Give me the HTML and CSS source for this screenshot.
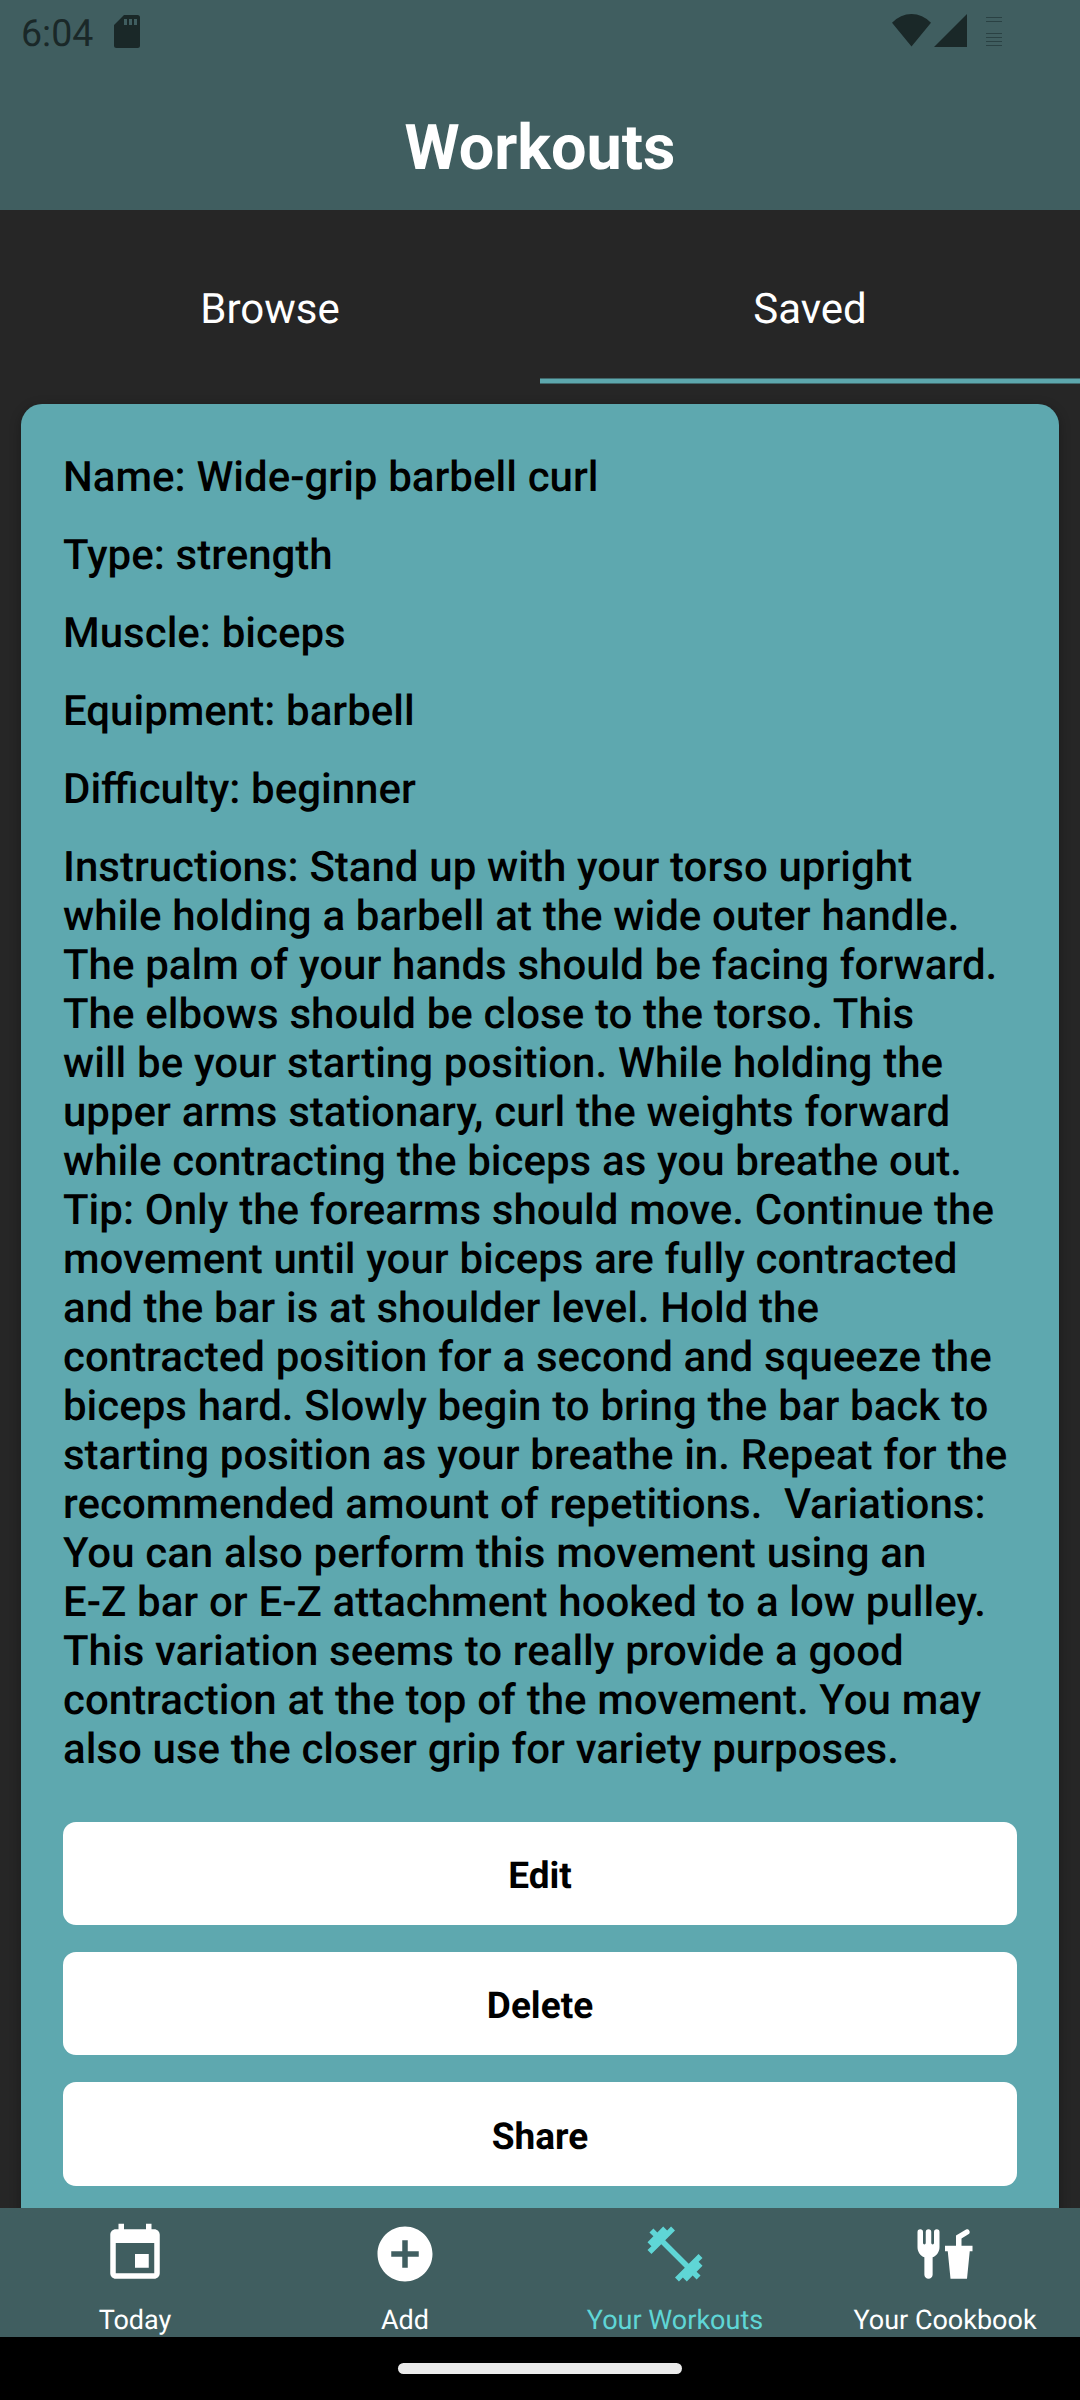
FILE: index.html
```html
<!DOCTYPE html>
<html lang="en">
<head>
<meta charset="utf-8">
<title>Workouts</title>
<link rel="stylesheet" href="styles.css">
</head>
<body>
<div class="screen">
  <div class="statusbar">
    <span class="clock">6:04</span>
    <svg class="sd" viewBox="0 0 26 33"><path fill-rule="evenodd" d="M10 0H23.5Q26 0 26 2.5V30.5Q26 33 23.5 33H2.500Q0 33 0 30.500V10ZM10 4V10H13V4ZM15 4V10H18V4ZM20 4V10H23V4Z"/></svg>
    <svg class="signals" viewBox="0 0 110 33"><path d="M0 8.800Q8.500 0 19.500 0T39 8.800L19.500 32.500ZM42 33L75 0V33Z"/><path class="battery" d="M94 3h16v1H94zM94 7h16v1H94zM94 19h16v1H94zM94 23h16v1H94zM94 27h16v1H94zM94 31h16v1H94z"/></svg>
  </div>
  <header class="header"><h1 class="title">Workouts</h1></header>
  <div class="tabs">
    <div class="tab">Browse</div>
    <div class="tab tab-active">Saved</div>
  </div>
  <main class="content">
    <article class="card">
      <p class="field">Name: Wide-grip barbell curl</p>
      <p class="field">Type: strength</p>
      <p class="field">Muscle: biceps</p>
      <p class="field">Equipment: barbell</p>
      <p class="field">Difficulty: beginner</p>
      <p class="field">Instructions: Stand up with your torso upright
while holding a barbell at the wide outer handle.
The palm of your hands should be facing forward.
The elbows should be close to the torso. This
will be your starting position. While holding the
upper arms stationary, curl the weights forward
while contracting the biceps as you breathe out.
Tip: Only the forearms should move. Continue the
movement until your biceps are fully contracted
and the bar is at shoulder level. Hold the
contracted position for a second and squeeze the
biceps hard. Slowly begin to bring the bar back to
starting position as your breathe in. Repeat for the
recommended amount of repetitions.  Variations:
You can also perform this movement using an
E-Z bar or E-Z attachment hooked to a low pulley.
This variation seems to really provide a good
contraction at the top of the movement. You may
also use the closer grip for variety purposes.</p>
      <div class="actions">
        <button class="button">Edit</button>
        <button class="button">Delete</button>
        <button class="button button-last">Share</button>
      </div>
    </article>
  </main>
  <nav class="nav">
    <div class="item">
      <svg class="icon" viewBox="0 0 24 24"><path d="M17 12h-5v5h5v-5zM16 1v2H8V1H6v2H5c-1.110 0-1.990.9-1.990 2L3 19c0 1.100.89 2 2 2h14c1.100 0 2-.9 2-2V5c0-1.100-.9-2-2-2h-1V1h-2zm3 18H5V8h14v11z"/></svg>
      <span class="label">Today</span>
    </div>
    <div class="item">
      <svg class="icon" viewBox="0 0 24 24"><path d="M12 2C6.480 2 2 6.480 2 12s4.480 10 10 10 10-4.480 10-10S17.520 2 12 2zm5 11h-4v4h-2v-4H7v-2h4V7h2v4h4v2z"/></svg>
      <span class="label">Add</span>
    </div>
    <div class="item item-active">
      <svg class="icon" viewBox="0 0 24 24"><path d="M20.570 14.860L22 13.430L20.570 12L17 15.570L8.430 7L12 3.430L10.570 2L9.140 3.430L7.710 2L5.570 4.140L4.140 2.710L2.710 4.140L4.140 5.570L2 7.710L3.430 9.140L2 10.570L3.430 12L7 8.430L15.570 17L12 20.570L13.430 22L14.860 20.570L16.290 22L18.430 19.860L19.860 21.290L21.290 19.860L19.860 18.430L22 16.290Z"/></svg>
      <span class="label">Your Workouts</span>
    </div>
    <div class="item">
      <svg class="icon" viewBox="0 0 24 24"><path d="M3 3A1 1 0 0 0 2 4V9.500C2 11.190 3.030 12.630 4.500 13.220V19.500A1.500 1.500 0 0 0 7.500 19.500V13.220C8.970 12.630 10 11.190 10 9.500V4A1 1 0 0 0 8 4V8A.5.5 0 0 1 7 8V4A1 1 0 0 0 5 4V8A.5.5 0 0 1 4 8V4A1 1 0 0 0 3 3M19.880 3C19.750 3 19.620 3.090 19.500 3.160L16 5.250V9H12V11H13L14 21H20L21 11H22V9H18V6.340L20.500 4.840C21 4.560 21.130 4 20.840 3.500C20.630 3.140 20.260 2.950 19.880 3Z"/></svg>
      <span class="label">Your Cookbook</span>
    </div>
  </nav>
  <div class="gesture"><div class="pill"></div></div>
</div>
</body>
</html>
```
FILE: styles.css
```css
* { box-sizing: border-box; }
body { margin: 0; font-family: Roboto, sans-serif; background: #000; text-rendering: geometricPrecision; }
.screen { width: 1080px; height: 2400px; display: flex; flex-direction: column; overflow: hidden; background: #262626; }
.statusbar { height: 66px; flex: none; background: #405e60; color: #1a2828; display: flex; align-items: flex-start; padding: 0 78px 0 21px; }
.clock { font-size: 37.500px; line-height: 44px; margin-top: 12px; width: 93px; }
.sd { width: 26px; height: 33px; margin-top: 15px; fill: #1a2828; }
.signals { width: 110px; height: 33px; margin: 14px 0 0 auto; fill: #1a2828; }
.battery { fill: #2a4143; }
.header { height: 144px; flex: none; background: #405e60; display: flex; justify-content: center; }
.title { margin: 46px 0 0; font-size: 63px; line-height: 74px; font-weight: 700; color: #fff; }
.tabs { height: 174px; flex: none; display: flex; color: #fff; }
.tab { flex: 1; display: flex; align-items: center; justify-content: center; font-size: 42px; padding-top: 24px; }
.tab-active { background: linear-gradient(#41696c 1px, #5da7ad 1px, #5da7ad 5px, #41696c 5px) 0 100% / 100% 6px no-repeat; }
.content { flex: 1; min-height: 0; overflow: hidden; padding: 20px 21px 0; }
.card { height: 1900px; background: #5ea8af; border-radius: 21px; padding: 49px 42px 0; color: #000; box-shadow: 0 3px 12px rgba(0, 0, 0, .3); }
.field { margin: 0 0 29px; font-size: 42px; line-height: 49px; font-weight: 500; white-space: pre; word-spacing: .35px; }
.actions { display: flex; flex-direction: column; gap: 27px; margin-top: 48px; }
.button { height: 103px; border: 0; border-radius: 13px; background: #fff; color: #000; font: 700 37px Roboto, sans-serif; padding: 6px 0 0; text-rendering: inherit; }
.button-last { height: 104px; }
.nav { height: 129px; flex: none; background: #405e60; display: flex; color: #fff; }
.item { flex: 1; display: flex; flex-direction: column; align-items: center; padding-top: 13px; }
.item-active { color: #5fd6d6; }
.icon { width: 66px; height: 66px; fill: currentColor; }
.label { font-size: 27px; line-height: 32px; margin-top: 17px; white-space: nowrap; }
.gesture { height: 63px; flex: none; background: #000; display: flex; justify-content: center; padding-top: 26px; }
.pill { width: 284px; height: 11px; border-radius: 6px; background: #ebebeb; }
```
